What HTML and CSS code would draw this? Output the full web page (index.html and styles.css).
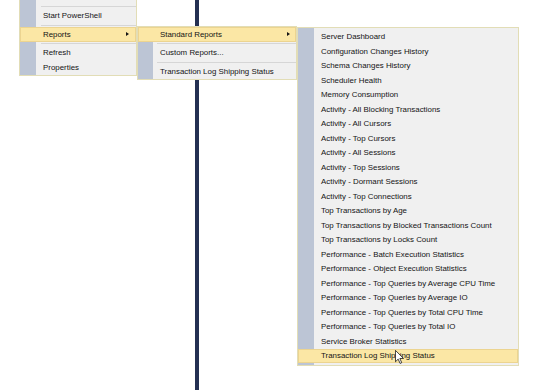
FILE: index.html
```html
<!DOCTYPE html>
<html lang="en">
<head>
    <meta charset="UTF-8">
    <title>Reports menu</title>
    <link rel="stylesheet" href="styles.css">
</head>
<body>
    <div class="page">
        <div class="pane-left"></div>
        <div class="pane-right"></div>
    </div>

    <!-- object explorer context menu -->
    <div class="menu menu-main">
        <div class="item"></div>
        <div class="sep"></div>
        <div class="item">Start PowerShell</div>
        <div class="sep"></div>
        <div class="item hot"><span>Reports</span><i class="arrow"></i></div>
        <div class="sep"></div>
        <div class="item">Refresh</div>
        <div class="item">Properties</div>
    </div>

    <div class="menu menu-reports">
        <div class="item hot"><span>Standard Reports</span><i class="arrow"></i></div>
        <div class="sep"></div>
        <div class="item">Custom Reports...</div>
        <div class="sep"></div>
        <div class="item">Transaction Log Shipping Status</div>
    </div>

    <div class="menu menu-standard">
        <div class="item">Server Dashboard</div>
        <div class="item">Configuration Changes History</div>
        <div class="item">Schema Changes History</div>
        <div class="item">Scheduler Health</div>
        <div class="item">Memory Consumption</div>
        <div class="item">Activity - All Blocking Transactions</div>
        <div class="item">Activity - All Cursors</div>
        <div class="item">Activity - Top Cursors</div>
        <div class="item">Activity - All Sessions</div>
        <div class="item">Activity - Top Sessions</div>
        <div class="item">Activity - Dormant Sessions</div>
        <div class="item">Activity - Top Connections</div>
        <div class="item">Top Transactions by Age</div>
        <div class="item">Top Transactions by Blocked Transactions Count</div>
        <div class="item">Top Transactions by Locks Count</div>
        <div class="item">Performance - Batch Execution Statistics</div>
        <div class="item">Performance - Object Execution Statistics</div>
        <div class="item">Performance - Top Queries by Average CPU Time</div>
        <div class="item">Performance - Top Queries by Average IO</div>
        <div class="item">Performance - Top Queries by Total CPU Time</div>
        <div class="item">Performance - Top Queries by Total IO</div>
        <div class="item">Service Broker Statistics</div>
        <div class="item hot">Transaction Log Shipping Status</div>
    </div>

    <svg class="cursor" width="9" height="14" viewBox="0 0 12 19">
        <path d="M0.5 0.5 L0.5 16 L4.2 12.4 L6.8 18.2 L9 17.2 L6.5 11.5 L11.5 11.5 Z" fill="#fff" stroke="#000" stroke-width="1"/>
    </svg>
</body>
</html>
```

FILE: styles.css
```css
* { margin:0; padding:0; box-sizing: border-box;}
body {
    width: 540px;
    height: 390px;
    position: relative;
    overflow: hidden;
    background: #fff;
    font-family: "Liberation Sans", Arial, sans-serif;
    font-size: 7.9px;
    color: #141414;
}
.page {
    display: flex;
    height: 390px;
}
.pane-left {
    width: 195px;
}
.pane-right {
    flex: 1;
    border-left: 4px solid #243052;
}

/* menus */
.menu {
    position: absolute;
    border: 1px solid #e2ddb6;
    background: linear-gradient(to right, #bcc5d5 16px, #f0f0f0 16px);
}
.item {
    height: 14.5px;
    display: flex;
    align-items: center;
    justify-content: space-between;
    padding-left: 23px;
    padding-right: 7px;
    white-space: nowrap;
}
.item.hot {
    background: #fbe7a5;
    box-shadow: inset 0 0 0 1px #ecd490;
}
.sep {
    height: 4px;
    display: flex;
    align-items: center;
    padding-left: 21px;
}
.sep::after {
    content: "";
    flex: 1;
    border-top: 1px solid #d6d6d6;
}
.arrow {
    width: 0;
    height: 0;
    border-left: 3px solid #141414;
    border-top: 2.5px solid transparent;
    border-bottom: 2.5px solid transparent;
}

.menu-main {
    left: 19px;
    top: -11px;
    width: 118px;
}
.menu-reports {
    left: 137px;
    top: 26px;
    width: 160px;
    background: linear-gradient(to right, #bcc5d5 15px, #f0f0f0 15px);
}
.menu-reports .item {
    padding-left: 22px;
    padding-right: 6px;
}
.menu-reports .sep {
    padding-left: 19px;
}
.menu-standard {
    left: 297px;
    top: 27px;
    width: 222px;
    padding: 1.5px 0;
}

.cursor {
    position: absolute;
    left: 395px;
    top: 350px;
}
```
